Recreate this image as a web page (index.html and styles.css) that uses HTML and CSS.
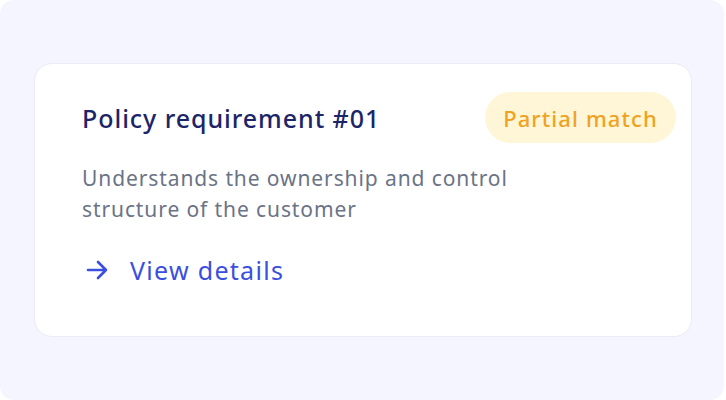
FILE: index.html
```html
<!DOCTYPE html>
<html>
<head>
<meta charset="utf-8">
<link rel="stylesheet" href="styles.css">
</head>
<body>
<div class="frame">
  <div class="card">
    <div class="card-head">
      <h2 class="title">Policy requirement #01</h2>
      <span class="badge">Partial match</span>
    </div>
    <p class="desc">Understands the ownership and control<br>structure of the customer</p>
    <a class="link" href="#">
      <svg class="arrow" width="22" height="20" viewBox="0 0 22 20" fill="none" stroke="currentColor" stroke-width="2.6" stroke-linecap="round" stroke-linejoin="round"><path d="M2 10h18M12 2l8 8-8 8"/></svg>
      <span>View details</span>
    </a>
  </div>
</div>
</body>
</html>
```
FILE: styles.css
```css
html, body {
  margin: 0;
  padding: 0;
  background: #ffffff;
}
body {
  width: 726px;
  height: 400px;
  font-family: "Noto Sans", sans-serif;
}
.frame {
  box-sizing: border-box;
  width: 724px;
  height: 400px;
  background: #f4f5fe;
  border-radius: 14px;
  padding: 63px 0 0 34px;
}
.card {
  box-sizing: border-box;
  width: 658px;
  height: 274px;
  background: #ffffff;
  border: 1px solid #e9ebf7;
  border-radius: 18px;
  padding: 28px 15px 0 47px;
}
.card-head {
  display: flex;
  justify-content: space-between;
  align-items: center;
}
.title {
  margin: 0;
  font-size: 25px;
  letter-spacing: 0.95px;
  font-weight: 500;
  color: #1b2568;
}
.badge {
  display: inline-flex;
  align-items: center;
  justify-content: center;
  width: 191px;
  height: 51px;
  border-radius: 26px;
  background: #fff6d8;
  color: #eea322;
  font-size: 22px;
  letter-spacing: 1.1px;
  font-weight: 500;
}
.desc {
  margin: 20px 0 0;
  font-size: 21px;
  letter-spacing: 0.9px;
  line-height: 31px;
  color: #6b7386;
}
.link {
  display: flex;
  align-items: center;
  gap: 22px;
  margin-top: 28px;
  padding-left: 4px;
  text-decoration: none;
  color: #3a4fe0;
  font-size: 25px;
  letter-spacing: 1.3px;
}
.arrow {
  flex: none;
}
```
